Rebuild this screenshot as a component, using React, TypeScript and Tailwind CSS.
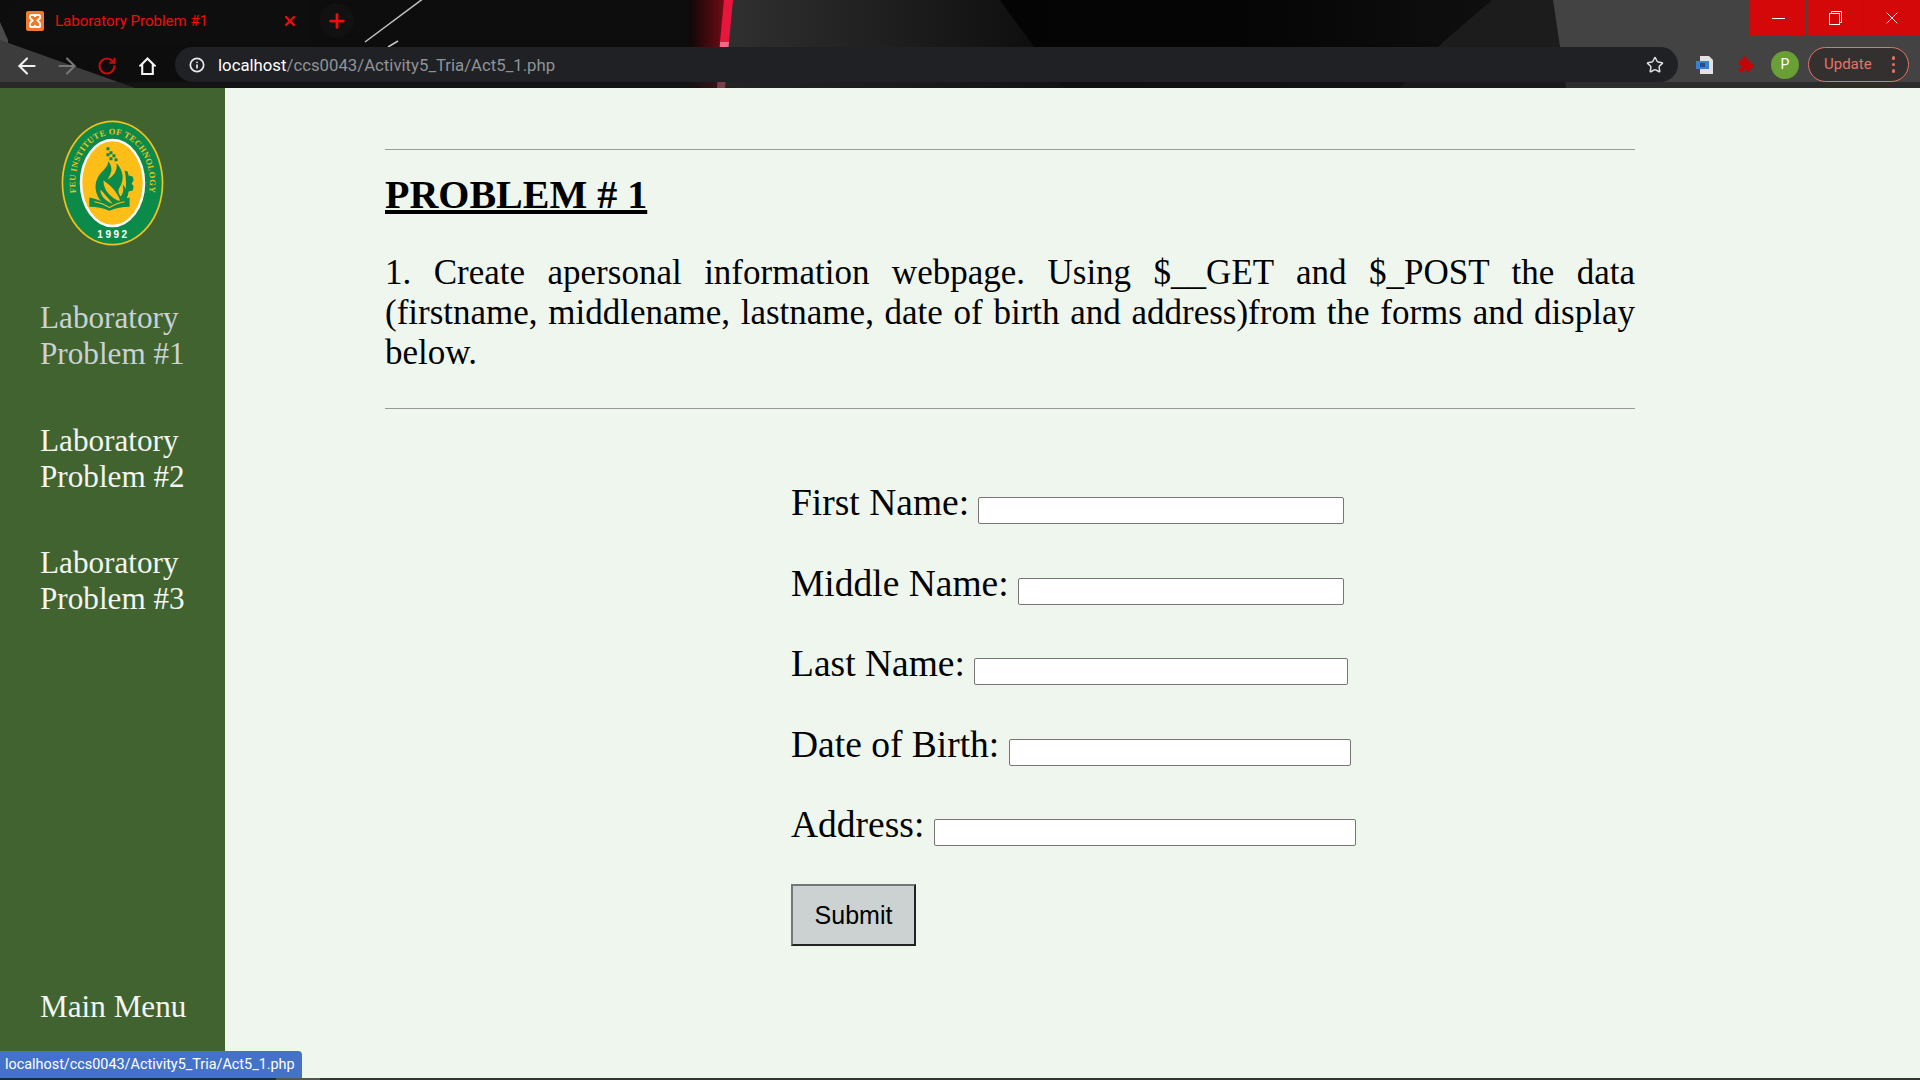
import { ArrowLeft, ArrowRight, RotateCw, Info, Star, X, Plus } from "lucide-react";

const serif = "font-['Liberation_Serif',serif]";

// dark wallpaper that shows through the browser frame
const FrameBackdrop = () => (
  <svg className="absolute inset-0 h-full w-full" viewBox="0 0 1920 88" preserveAspectRatio="none">
    <defs>
      <linearGradient id="mid" x1="0" x2="1" y1="0" y2="0">
        <stop offset="0" stopColor="#303030" />
        <stop offset="0.45" stopColor="#202020" />
        <stop offset="1" stopColor="#0b0b0b" />
      </linearGradient>
      <linearGradient id="glow" x1="0" x2="1" y1="0" y2="0">
        <stop offset="0" stopColor="#0d0707" />
        <stop offset="0.8" stopColor="#5c0a12" />
        <stop offset="1" stopColor="#7a0c18" />
      </linearGradient>
      <linearGradient id="dark" x1="0" x2="1" y1="0" y2="0">
        <stop offset="0" stopColor="#040404" />
        <stop offset="0.5" stopColor="#050505" />
        <stop offset="1" stopColor="#0f0f0f" />
      </linearGradient>
    </defs>
    <rect width="1920" height="88" fill="#0d0d0d" />
    <polygon points="0,22 8,40 8,88 0,88" fill="#4a4a4a" />
    <polygon points="0,40 135,88 0,88" fill="#3c3c3c" />
    <rect x="689" width="36" height="88" fill="url(#glow)" />
    <polygon points="728,0 1000,0 1064,88 724,88" fill="url(#mid)" />
    <polygon points="1000,0 1492,0 1443,42 1400,88 1064,88" fill="url(#dark)" />
    <polygon points="1492,0 1553,0 1566,88 1400,88 1443,42" fill="#1c1c1c" />
    <polygon points="1553,0 1920,0 1920,88 1566,88" fill="#434343" />
    <polygon points="724,0 733,0 729,42 720,42" fill="#e8153c" />
    <polygon points="720,42 729,42 725,88 717,88" fill="#f06a85" />
    <line x1="365" y1="42" x2="424" y2="-2" stroke="#c4c4c4" strokeWidth="1.5" />
    <line x1="388" y1="47" x2="398" y2="41" stroke="#c4c4c4" strokeWidth="1.5" />
    <rect y="82" width="1920" height="6" fill="#1a1a1c" opacity="0.55" />
  </svg>
);

const WindowButton = ({ children }: { children: React.ReactNode }) => (
  <div className="flex h-[36px] w-[56px] items-center justify-center bg-[#d40808]">{children}</div>
);

const ToolButton = ({ children }: { children: React.ReactNode }) => (
  <div className="flex h-[35px] w-[40px] items-center justify-center pt-[2px]">{children}</div>
);

const XamppIcon = () => (
  <svg width="20" height="20" viewBox="0 0 18 20">
    <rect width="18" height="20" rx="2" fill="#f07a2a" />
    <path d="M5 4h2.500c1 0 1.500 1.200 1.500 2 0-.8.5-2 1.500-2H13c1.500 0 1.500 3 0 4l-1.500 1.500 1.500 1.500c1.500 1 1.500 5 0 5h-2.500c-1 0-1.500-1.200-1.500-2 0 .8-.5 2-1.500 2H5c-1.500 0-1.500-4 0-5l1.500-1.500L5 8C3.500 7 3.500 4 5 4z" fill="none" stroke="#fff" strokeWidth="2" />
  </svg>
);

const BrowserChrome = () => (
  <header className="relative h-[88px] shrink-0 overflow-hidden font-['Roboto',sans-serif]">
    <FrameBackdrop />
    <div className="relative flex h-[47px] items-start">
      <div className="ml-[8px] flex h-[42px] w-[302px] items-center rounded-t-lg bg-[#0e0e0e] pl-[17px] pr-[12px]">
        <XamppIcon />
        <span className="ml-[10px] flex-1 text-[15px] text-[#f00c0c]">Laboratory Problem #1</span>
        <X className="h-[16px] w-[16px] text-[#f00c0c]" strokeWidth={3.4} />
      </div>
      <div className="ml-[10px] mt-[3px] flex h-[35px] w-[34px] items-center justify-center rounded-full bg-[#111]">
        <Plus className="h-[22px] w-[22px] text-[#f00c0c]" strokeWidth={3} />
      </div>
      <div className="ml-auto flex gap-px">
        <WindowButton>
          <span className="h-px w-[13px] bg-white" />
        </WindowButton>
        <WindowButton>
          <svg width="13" height="14" viewBox="0 0 13 14" fill="none" stroke="#fff" strokeWidth="1">
            <rect x="0.500" y="2.500" width="10" height="11" />
            <path d="M2.500 2.500V.5h10v11h-2" />
          </svg>
        </WindowButton>
        <WindowButton>
          <X className="h-[20px] w-[20px] text-white" strokeWidth={1.1} />
        </WindowButton>
      </div>
    </div>
    <div className="relative flex h-[35px] items-center pl-[7px] pr-[11px]">
      <ToolButton>
        <ArrowLeft className="h-[26px] w-[26px] text-[#f1f1f1]" strokeWidth={1.900} />
      </ToolButton>
      <ToolButton>
        <ArrowRight className="h-[26px] w-[26px] text-[#777]" strokeWidth={1.900} />
      </ToolButton>
      <ToolButton>
        <RotateCw className="h-[20px] w-[20px] text-[#c40d0d]" strokeWidth={2.6} />
      </ToolButton>
      <ToolButton>
        <svg width="17" height="18" viewBox="0 0 16 17" fill="none" stroke="#f4f4f4" strokeWidth="2">
          <path d="M8 1.500 1.500 8H3v8h10V8h1.500z" />
        </svg>
      </ToolButton>
      <div className="ml-[8px] flex h-[35px] w-[1503px] items-center rounded-full bg-[#202125] pl-[14px] pr-[14px]">
        <Info className="h-[16px] w-[16px] text-[#e8e8e8]" strokeWidth={2.6} />
        <span className="ml-[13px] pt-[2px] text-[16.750px] text-[#8f9397]">
          <span className="text-white">localhost</span>/ccs0043/Activity5_Tria/Act5_1.php
        </span>
        <Star className="ml-auto h-[18px] w-[18px] text-[#e0e0e0]" strokeWidth={2} />
      </div>
      <svg className="ml-[17px]" width="20" height="20" viewBox="0 0 20 20">
        <path d="M5 1h9l4 4v14H5z" fill="#e2e2e2" />
        <rect x="1" y="6" width="13" height="8" fill="#3c7ed6" />
        <rect x="5" y="8" width="5" height="4" fill="#26508c" />
      </svg>
      <svg className="ml-[21px]" width="18" height="20" viewBox="0 0 20 20">
        <path d="M7 3a2.500 2.500 0 0 1 5 0v2h4v4h1a2.500 2.500 0 0 1 0 5h-1v4h-4v-1a2 2 0 0 0-4 0v1H3v-4h1a2 2 0 0 0 0-4H3V5h4z" fill="#c40404" />
      </svg>
      <div className="ml-[17px] flex h-[28px] w-[28px] items-center justify-center rounded-full bg-[#6a9f35] text-[14px] text-white">P</div>
      <div className="ml-[9px] flex h-[35px] w-[101px] items-center justify-between rounded-full border border-[#e57368] bg-[#33302f] pl-[15px] pr-[13px] text-[15px] text-[#e57368]">
        Update
        <span className="flex flex-col gap-[3px]">
          <span className="h-[3.500px] w-[3.500px] rounded-full bg-[#e57368]" />
          <span className="h-[3.500px] w-[3.500px] rounded-full bg-[#e57368]" />
          <span className="h-[3.500px] w-[3.500px] rounded-full bg-[#e57368]" />
        </span>
      </div>
    </div>
  </header>
);

const FeuLogo = () => (
  <svg className="block" width="104" height="127" viewBox="0 0 103 126">
    <defs>
      <path id="crest-arc" d="M19.700 88A37 48 0 1 1 82.300 88" />
    </defs>
    <ellipse cx="51" cy="62.500" rx="50.500" ry="62" fill="#f4c21c" />
    <ellipse cx="51" cy="62.500" rx="48.800" ry="60.300" fill="#0c8a4a" />
    <ellipse cx="51" cy="62.500" rx="32.500" ry="44" fill="#fff" />
    <ellipse cx="51" cy="62.500" rx="30" ry="41.500" fill="#fdbf17" />
    <text className="font-['Liberation_Serif',serif]" fontSize="8.500" fontWeight="700" fill="#f4c21c" letterSpacing="0.400" textAnchor="middle">
      <textPath href="#crest-arc" startOffset="50%">FEU INSTITUTE OF TECHNOLOGY</textPath>
    </text>
    <text x="52" y="117" textAnchor="middle" className="font-['Liberation_Sans',sans-serif]" fontSize="10" fontWeight="700" fill="#fff" letterSpacing="2.500">1992</text>
    {/* tower, flame, gear and open book */}
    <path d="M45 27h3v3h-3zM48 31h3v3h-3zM45 33h3v3h-3zM51 34h3v3h-3zM48 37h3v3h-3zM53 38h3v3h-3z" fill="#0c8a4a" />
    <path d="M46 86C35 79 31 66 37 56c3-5 9-8 10-15 5 7 3 12-1 18 6-3 10-8 9-16 7 7 8 17 3 24-2 3-1 6 1 9 3-3 3-8 2-12 5 4 6 14 2 22z" fill="#0c8a4a" />
    <path d="M42 60c6 4 14 11 17 21-8-3-17-10-17-21zM39 69c4 4 8 9 12 14-6-2-12-7-12-14z" fill="#fdbf17" />
    <path d="M63 50l3 1 1 4 4 1 1 4-2 3 2 3-1 4-4 1-1 5-4 1c3-7 3-19 1-27z" fill="#0c8a4a" />
    <path d="M28 77c7 1 14 4 20 9 6-5 13-8 20-9v9c-7 0-14 1-20 4-6-3-13-4-20-4z" fill="#0c8a4a" />
    <path d="M33 81c6 1 11 3 15 6 4-3 9-5 15-6" fill="none" stroke="#fdbf17" strokeWidth="1" />
  </svg>
);

const SideLink = ({ label, active }: { label: string; active?: boolean }) => (
  <a className={active ? "mb-[50.500px] block w-[155px] text-[#c9d2d6]" : "mb-[50.500px] block w-[155px] text-[#f2f5f2]"}>{label}</a>
);

const Sidebar = () => (
  <aside className="flex w-[225px] shrink-0 flex-col bg-[#41632f] pl-[40px] text-[31.200px] leading-[36px]">
    <div className="ml-[21px] mt-[32px] mb-[53px]">
      <FeuLogo />
    </div>
    <SideLink label="Laboratory Problem #1" active />
    <SideLink label="Laboratory Problem #2" />
    <SideLink label="Laboratory Problem #3" />
    <a className="mt-auto mb-[53px] block text-[#f2f5f2]">Main Menu</a>
  </aside>
);

const Field = ({ label, width }: { label: string; width: string }) => (
  <div className="mb-[37px] h-[43.500px] whitespace-nowrap">
    {label}{" "}
    <input type="text" className={`${width} h-[27px] rounded-[2px] border border-[#767676] bg-white align-[-8px]`} />
  </div>
);

export default function App() {
  return (
    <div className={`relative flex h-[1080px] w-[1920px] flex-col overflow-hidden ${serif}`}>
      <BrowserChrome />
      <div className="flex flex-1">
        <Sidebar />
        <main className="flex-1 bg-[#eff6ee] pl-[160px] text-black">
          <div className="w-[1250px]">
            <hr className="mt-[61px] border-t border-[#999]" />
            <h1 className="mt-[22px] text-[40px] font-bold leading-[46px] underline">PROBLEM # 1</h1>
            <p className="mt-[35px] text-justify text-[35px] leading-[40px]">
              1. Create apersonal information webpage. Using $__GET and $_POST the data (firstname, middlename, lastname, date of birth and address)from the forms and display below.
            </p>
            <hr className="mt-[35px] border-t border-[#999]" />
            <form className="mt-[72px] ml-[406px] text-[37.500px] leading-[43.500px]">
              <Field label="First Name:" width="w-[366px]" />
              <Field label="Middle Name:" width="w-[326px]" />
              <Field label="Last Name:" width="w-[374px]" />
              <Field label="Date of Birth:" width="w-[342px]" />
              <Field label="Address:" width="w-[422px]" />
              <button type="button" className="h-[62px] w-[125px] border-2 border-t-[#767676] border-l-[#767676] border-r-[#222] border-b-[#222] bg-[#ccd1d1] pt-[2px] font-['Liberation_Sans',sans-serif] text-[25px]">
                Submit
              </button>
            </form>
          </div>
        </main>
      </div>
      <div className="absolute bottom-[2px] left-0 flex h-[27px] w-[302px] items-center rounded-tr-[4px] bg-[#4472c9] pl-[5px] font-['Roboto',sans-serif] text-[14.400px] text-white">
        localhost/ccs0043/Activity5_Tria/Act5_1.php
      </div>
      <div className="flex h-[2px] shrink-0">
        <div className="w-[276px] bg-[#1a2a45]" />
        <div className="w-[44px] bg-[#555]" />
        <div className="flex-1 bg-[#333]" />
      </div>
    </div>
  );
}
